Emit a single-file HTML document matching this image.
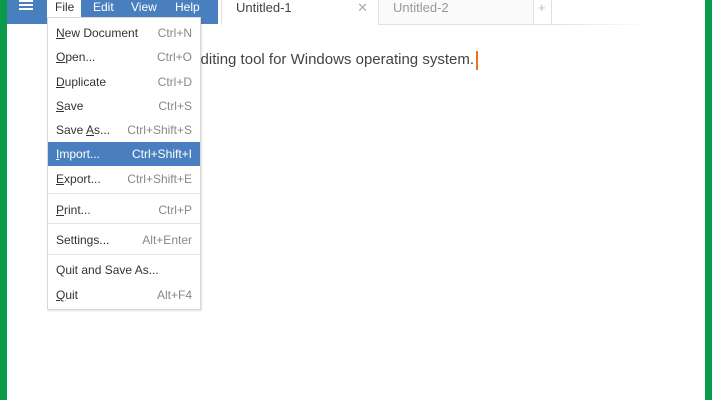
<!DOCTYPE html>
<html><head><style>
*{margin:0;padding:0;box-sizing:border-box}
body{width:712px;height:400px;overflow:hidden;background:#fff;font-family:"Liberation Sans",sans-serif;position:relative}
.g{position:absolute;top:0;bottom:0;width:7px;background:#0a9a4c}
.bar{position:absolute;left:7px;top:0;width:211px;height:24px;background:#4a7fbf}
.ham{position:absolute;left:12px;top:0px;width:14px;height:11px}
.ham i{display:block;height:2px;background:#fff;margin-bottom:2px}
.mt{position:absolute;top:0;font-size:12px;color:#fff;line-height:15px}
.file{position:absolute;left:47px;top:0;width:34px;height:18px;background:#fff;color:#333;font-size:12px;padding-left:8px;line-height:15px}
.tab{position:absolute;top:0;height:25px;font-size:13px;line-height:15px;padding-left:14px}
.menu{position:absolute;left:47px;top:17px;width:154px;height:293px;background:#fff;border:1px solid #d8d8d8;box-shadow:1px 1px 2px rgba(0,0,0,.12);font-size:12px;color:#333}
.it{position:absolute;left:0;width:152px;height:24px;line-height:25px;padding-left:8px}
.it span{position:absolute;right:8px;color:#888}
.it.h{background:#4a7fbf;color:#fff}.it.h span{color:#fff}
.sep{position:absolute;left:0;width:152px;height:1px;background:#e2e2e2}
u{text-decoration:underline}
</style></head><body>
<div class="g" style="left:0"></div><div class="g" style="left:705px"></div>
<div class="bar"><div class="ham"><i></i><i></i><i></i></div>
<div class="mt" style="left:86px">Edit</div><div class="mt" style="left:124px">View</div><div class="mt" style="left:168px">Help</div></div>
<div class="file">File</div>
<div style="position:absolute;left:218px;top:0;width:4px;height:25px;background:#fff;border-right:1px solid #e0e0e0"></div>
<div class="tab" style="left:222px;width:156px;color:#444;background:#fff">Untitled-1<span style="position:absolute;right:10px;color:#aaa;font-size:13px">✕</span></div>
<div class="tab" style="left:378px;width:156px;color:#999;border:1px solid #e0e0e0;border-top:none;background:#fafafa">Untitled-2</div>
<div class="tab" style="left:533px;width:19px;color:#bbb;border:1px solid #e0e0e0;border-top:none;padding-left:4px">+</div>
<div style="position:absolute;left:552px;top:24px;width:100px;height:1px;background:linear-gradient(90deg,#e0e0e0,#fff)"></div>
<div style="position:absolute;right:238px;top:51px;font-size:15px;color:#444;white-space:nowrap">text editing tool for Windows operating system.</div>
<div style="position:absolute;left:476px;top:51px;width:2px;height:19px;background:#f07020"></div>
<div class="menu">
<div class="it" style="top:3px"><u>N</u>ew Document<span>Ctrl+N</span></div>
<div class="it" style="top:27px"><u>O</u>pen...<span>Ctrl+O</span></div>
<div class="it" style="top:52px"><u>D</u>uplicate<span>Ctrl+D</span></div>
<div class="it" style="top:76px"><u>S</u>ave<span>Ctrl+S</span></div>
<div class="it" style="top:100px">Save <u>A</u>s...<span>Ctrl+Shift+S</span></div>
<div class="it h" style="top:124px"><u>I</u>mport...<span>Ctrl+Shift+I</span></div>
<div class="it" style="top:149px"><u>E</u>xport...<span>Ctrl+Shift+E</span></div>
<div class="sep" style="top:175px"></div>
<div class="it" style="top:180px"><u>P</u>rint...<span>Ctrl+P</span></div>
<div class="sep" style="top:205px"></div>
<div class="it" style="top:210px">Settings...<span>Alt+Enter</span></div>
<div class="sep" style="top:236px"></div>
<div class="it" style="top:240px">Quit and Save As...</div>
<div class="it" style="top:265px"><u>Q</u>uit<span>Alt+F4</span></div>
</div>
</body></html>
